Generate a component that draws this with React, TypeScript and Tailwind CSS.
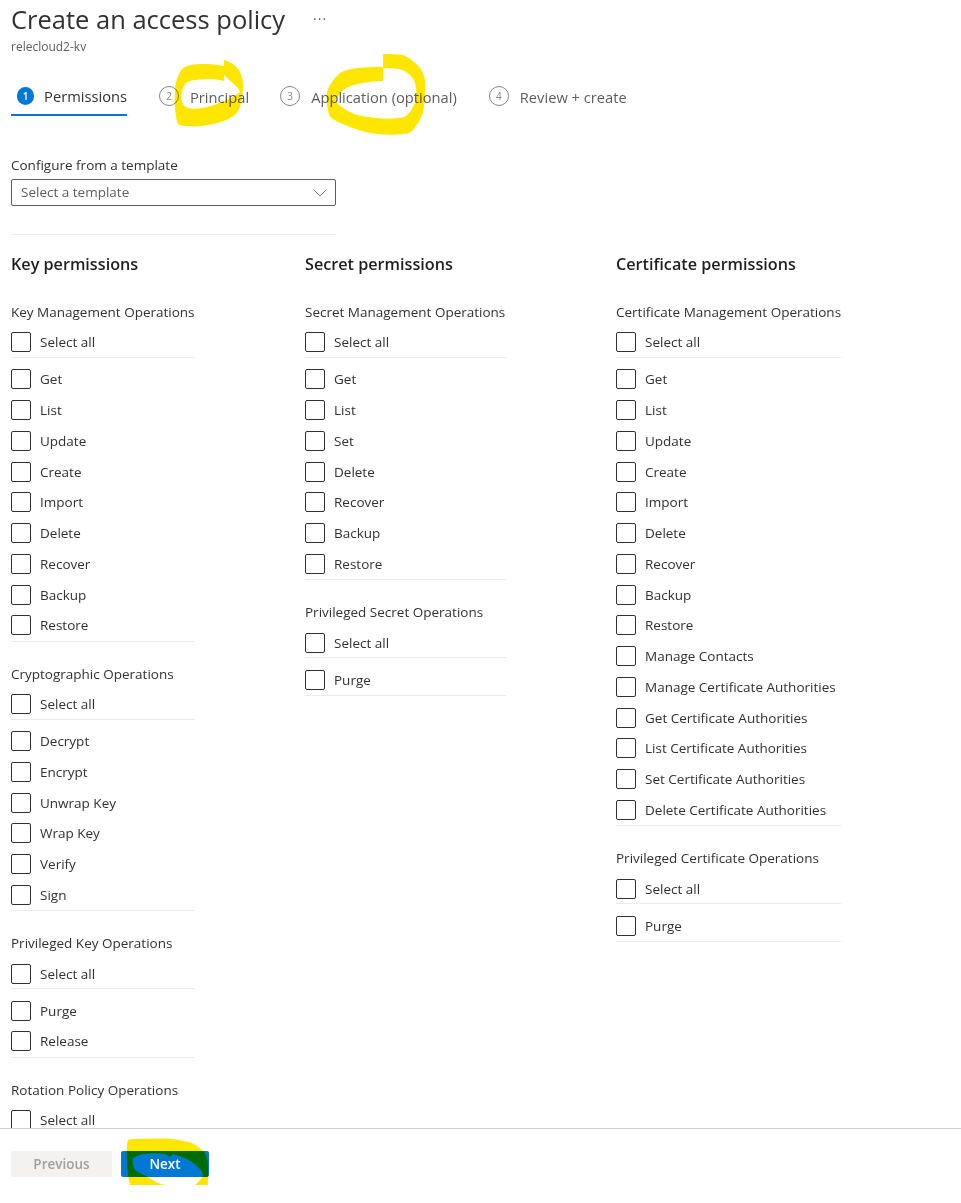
import { ChevronDown } from "lucide-react";

type Group = { title: string; items: string[] };

const KEY_GROUPS: Group[] = [
  { title: "Key Management Operations", items: ["Get", "List", "Update", "Create", "Import", "Delete", "Recover", "Backup", "Restore"] },
  { title: "Cryptographic Operations", items: ["Decrypt", "Encrypt", "Unwrap Key", "Wrap Key", "Verify", "Sign"] },
  { title: "Privileged Key Operations", items: ["Purge", "Release"] },
  { title: "Rotation Policy Operations", items: [] },
];

const SECRET_GROUPS: Group[] = [
  { title: "Secret Management Operations", items: ["Get", "List", "Set", "Delete", "Recover", "Backup", "Restore"] },
  { title: "Privileged Secret Operations", items: ["Purge"] },
];

const CERT_GROUPS: Group[] = [
  {
    title: "Certificate Management Operations",
    items: [
      "Get", "List", "Update", "Create", "Import", "Delete", "Recover", "Backup", "Restore", "Manage Contacts",
      "Manage Certificate Authorities", "Get Certificate Authorities", "List Certificate Authorities",
      "Set Certificate Authorities", "Delete Certificate Authorities",
    ],
  },
  { title: "Privileged Certificate Operations", items: ["Purge"] },
];

const STEPS = [
  { n: 2, label: "Principal", gap: "ml-[32px]" },
  { n: 3, label: "Application (optional)", gap: "ml-[31px]" },
  { n: 4, label: "Review + create", gap: "ml-[32px]" },
];

function Row({ label }: { label: string }) {
  return (
    <label className="flex h-[30.75px] items-center gap-[9px] text-[13.5px] text-[#323130]">
      <span className="h-5 w-5 shrink-0 rounded-[2px] border border-[#323130] bg-white" />
      <span className="whitespace-nowrap">{label}</span>
    </label>
  );
}

function PermissionGroup({ group }: { group: Group }) {
  return (
    <div className="mb-[22px]">
      <div className="mb-[5px] h-[20px] whitespace-nowrap text-[13.5px] leading-[20px] text-[#323130]">{group.title}</div>
      <div className="h-[31px] border-b border-[#edebe9]">
        <Row label="Select all" />
      </div>
      {group.items.length > 0 && (
        <div className="mt-[6px] border-b border-[#edebe9]">
          {group.items.map((item) => (
            <Row key={item} label={item} />
          ))}
        </div>
      )}
    </div>
  );
}

function PermissionColumn({ title, groups, width }: { title: string; groups: Group[]; width: string }) {
  return (
    <div className={`shrink-0 ${width}`}>
      <h2 className="mb-[26px] h-[24px] whitespace-nowrap text-[16.2px] font-semibold leading-[24px] text-[#201f1e]">{title}</h2>
      {groups.map((g) => (
        <PermissionGroup key={g.title} group={g} />
      ))}
    </div>
  );
}

export default function App() {
  return (
    <div className="relative flex h-[1203px] w-[961px] flex-col overflow-hidden bg-white font-['Open_Sans','Liberation_Sans',sans-serif]">
      <div className="min-h-0 flex-1 overflow-hidden px-[11px]">
        {/* Header */}
        <div className="flex h-[38px] items-center">
          <h1 className="text-[25.5px] font-medium leading-[38px] text-[#323130]">Create an access policy</h1>
          <span className="ml-[28px] text-[14px] leading-none tracking-[1px] text-[#605e5c]">···</span>
        </div>
        <p className="text-[12px] leading-[18px] text-[#605e5c]">relecloud2-kv</p>

        {/* Steps */}
        <div className="mt-[14px] flex h-[46px] items-start text-[14.7px] text-[#605e5c]">
          <div className="flex h-[46px] w-[116px] items-center gap-[10px] border-b-2 border-[#0078d4] pl-[6px] pt-[8px]">
            <span className="flex h-[18px] w-[18px] items-center justify-center rounded-full bg-[#0078d4] text-[10px] font-semibold text-white">1</span>
            <span className="text-[#323130]">Permissions</span>
          </div>
          {STEPS.map((s) => (
            <div key={s.n} className={`flex h-[46px] items-center gap-[11px] pt-[8px] ${s.gap}`}>
              <span className="-mt-[2px] flex h-5 w-5 items-center justify-center rounded-full border border-[#8a8886] text-[10px] text-[#8a8886]">{s.n}</span>
              <span className="whitespace-nowrap">{s.label}</span>
            </div>
          ))}
        </div>

        {/* Template */}
        <div className="mt-[39px] text-[13.5px] leading-[20px] text-[#323130]">Configure from a template</div>
        <div className="mt-[4px] flex h-[27px] w-[325px] items-center justify-between rounded-[2px] border border-[#605e5c] pl-[9px] pr-[3px] text-[13.5px] text-[#605e5c]">
          <span>Select a template</span>
          <ChevronDown className="h-6 w-6 text-[#605e5c]" strokeWidth={0.8} />
        </div>
        <div className="mt-[28px] h-px w-[325px] bg-[#edebe9]" />

        {/* Columns */}
        <div className="mt-[17px] flex items-start gap-[110px]">
          <PermissionColumn title="Key permissions" groups={KEY_GROUPS} width="w-[184px]" />
          <PermissionColumn title="Secret permissions" groups={SECRET_GROUPS} width="w-[201px]" />
          <PermissionColumn title="Certificate permissions" groups={CERT_GROUPS} width="w-[225px]" />
        </div>
      </div>

      {/* Footer */}
      <div className="flex h-[75px] shrink-0 items-start gap-[9px] border-t border-[#d2d0ce] bg-white px-[11px] pt-[22px]">
        <button className="h-[26px] w-[101px] rounded-[2px] bg-[#f3f2f1] text-[13.5px] font-semibold text-[#a19f9d]">Previous</button>
        <button className="h-[26px] w-[88px] rounded-[2px] bg-[#0078d4] text-[13.5px] font-semibold text-white">Next</button>
      </div>

      {/* Yellow marker annotations */}
      <svg className="pointer-events-none absolute left-0 top-0 mix-blend-multiply" width="961" height="1203" viewBox="0 0 961 1203">
        <path
          fillRule="evenodd"
          fill="#ffe600"
          d="M224 60 C234 63 243 70 243 85 C243 100 240 108 237 113 C231 119 222 122 213 124 C204 126 195 127 187 126 C181 126 178 125 177 122 C175 112 174 103 175 93 C175 84 177 77 180 72 C182 69 184 67 187 66 C194 64 200 64 207 64 C213 64 219 65 224 66 Z M224 75 L238 88 L240 92 C235 96 229 99 222 102 C215 105 209 107 202 108 C196 109 192 109 188 108 C185 107 183 105 182 102 C181 98 181 95 182 92 C183 88 184 85 186 83 C189 81 192 80 196 80 C201 79 206 79 211 79 C216 79 220 80 224 81 Z"
        />
        <path
          fillRule="evenodd"
          fill="#ffe600"
          d="M383 54 C391 54 397 54 403 55 C410 58 416 63 420 68 C423 72 425 77 425 82 C425 93 425 103 423 112 C421 119 417 125 413 130 C410 133 407 134 403 134 C394 135 386 135 377 134 C367 133 358 130 350 127 C342 124 335 121 330 117 C327 109 326 100 327 92 C330 84 334 78 340 73 C345 70 351 69 357 68 C366 67 375 67 383 67 Z M383 68 C389 68 394 68 399 69 C406 71 411 75 414 80 C416 85 417 92 416 98 C415 104 412 110 408 114 C405 117 402 118 398 118 C391 119 384 119 377 118 C368 117 360 116 354 114 C348 111 342 108 338 104 L335 101 C337 97 339 94 342 91 C347 87 352 85 358 84 C366 82 375 81 383 81 Z"
        />
        <path
          fillRule="evenodd"
          fill="#ffe600"
          d="M128 1140 C130 1139 132 1139 135 1139 C147 1139 160 1138 172 1139 C180 1140 186 1141 192 1143 C197 1146 202 1149 205 1153 C207 1157 208 1162 208 1167 L208 1185 L130 1185 C128 1178 127 1170 127 1163 C127 1157 126 1151 127 1147 C127 1144 127 1142 128 1140 Z M133 1158 C136 1156 139 1155 142 1154 C150 1153 158 1153 165 1154 L170 1157 L173 1154 C181 1156 187 1159 192 1162 C196 1165 200 1168 202 1172 L203 1176 C201 1179 198 1182 195 1185 L168 1185 C164 1185 161 1184 158 1183 C154 1181 151 1179 148 1177 C143 1175 138 1172 135 1170 C133 1166 132 1162 133 1158 Z"
        />
      </svg>
    </div>
  );
}
